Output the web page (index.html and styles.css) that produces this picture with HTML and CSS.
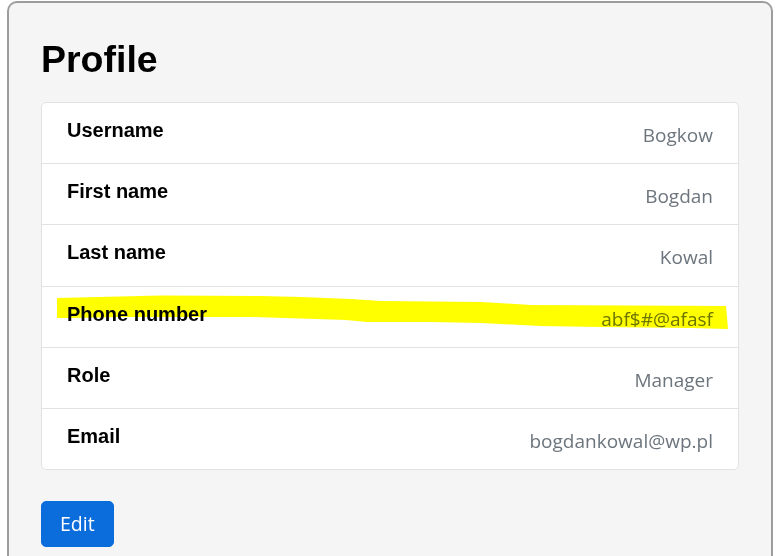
FILE: index.html
```html
<!DOCTYPE html>
<html lang="en">
<head>
<meta charset="utf-8">
<title>Profile</title>
<link rel="stylesheet" href="styles.css">
</head>
<body>
<div class="card">
  <h1 class="title">Profile</h1>
  <ul class="list">
    <li class="row"><span class="label">Username</span><span class="value">Bogkow</span></li>
    <li class="row"><span class="label">First name</span><span class="value">Bogdan</span></li>
    <li class="row"><span class="label">Last name</span><span class="value">Kowal</span></li>
    <li class="row row-marked">
      <span class="label">Phone number</span><span class="value">abf$#@afasf</span>
      <svg class="marker" width="697" height="60" viewBox="0 0 697 60" aria-hidden="true">
        <polygon fill="#ffff00" points="15,11 119,8.5 219,9 259,10 309,12 339,14 439,15 489,18 684,19 686,42 649,41 559,40 499,39 479,38 439,36 389,35 325,35 304,33 274,32 209,30 79,30 29,31 15,31"/>
      </svg>
    </li>
    <li class="row"><span class="label">Role</span><span class="value">Manager</span></li>
    <li class="row"><span class="label">Email</span><span class="value">bogdankowal@wp.pl</span></li>
  </ul>
  <button class="btn">Edit</button>
</div>
</body>
</html>
```
FILE: styles.css
```css
html, body {
  margin: 0;
  padding: 0;
  background: #ffffff;
}
body {
  padding: 1px 8px 0 7px;
  height: 556px;
  overflow: hidden;
  box-sizing: border-box;
}
.card {
  background: #f5f5f5;
  border: 2px solid #9d9d9d;
  border-bottom: none;
  border-radius: 10px 10px 0 0;
  padding: 34px 32px 0 32px;
  height: 555px;
  box-sizing: border-box;
  overflow: hidden;
}
.title {
  margin: 0 0 21px 0;
  font-family: "Liberation Sans", Arial, sans-serif;
  font-weight: bold;
  font-size: 37.5px;
  line-height: 44px;
  color: #000;
}
.list {
  list-style: none;
  margin: 0;
  padding: 0;
  background: #ffffff;
  border: 1px solid #e2e2e2;
  border-radius: 5px;
}
.row {
  display: flex;
  justify-content: space-between;
  align-items: flex-start;
  padding: 15px 25px 0 25px;
  height: 60.2px;
  box-sizing: border-box;
  position: relative;
}
.row + .row {
  border-top: 1px solid #e2e2e2;
  height: 61.2px;
}
.label {
  font-family: "Liberation Sans", Arial, sans-serif;
  font-weight: bold;
  font-size: 20px;
  line-height: 24px;
  color: #000;
}
.value {
  font-family: "Open Sans", "Noto Sans", sans-serif;
  font-size: 19px;
  line-height: 28px;
  color: #6c757d;
  margin-top: 3px;
}
.marker {
  position: absolute;
  left: 0;
  top: 0;
  mix-blend-mode: multiply;
  pointer-events: none;
}
.btn {
  margin-top: 31px;
  background: #0b6cdb;
  color: #ffffff;
  border: 1px solid #0b6cdb;
  border-radius: 5px;
  font-family: "Open Sans", "Noto Sans", sans-serif;
  font-size: 19.5px;
  line-height: 28px;
  padding: 8px 18px;
  cursor: pointer;
}
```
